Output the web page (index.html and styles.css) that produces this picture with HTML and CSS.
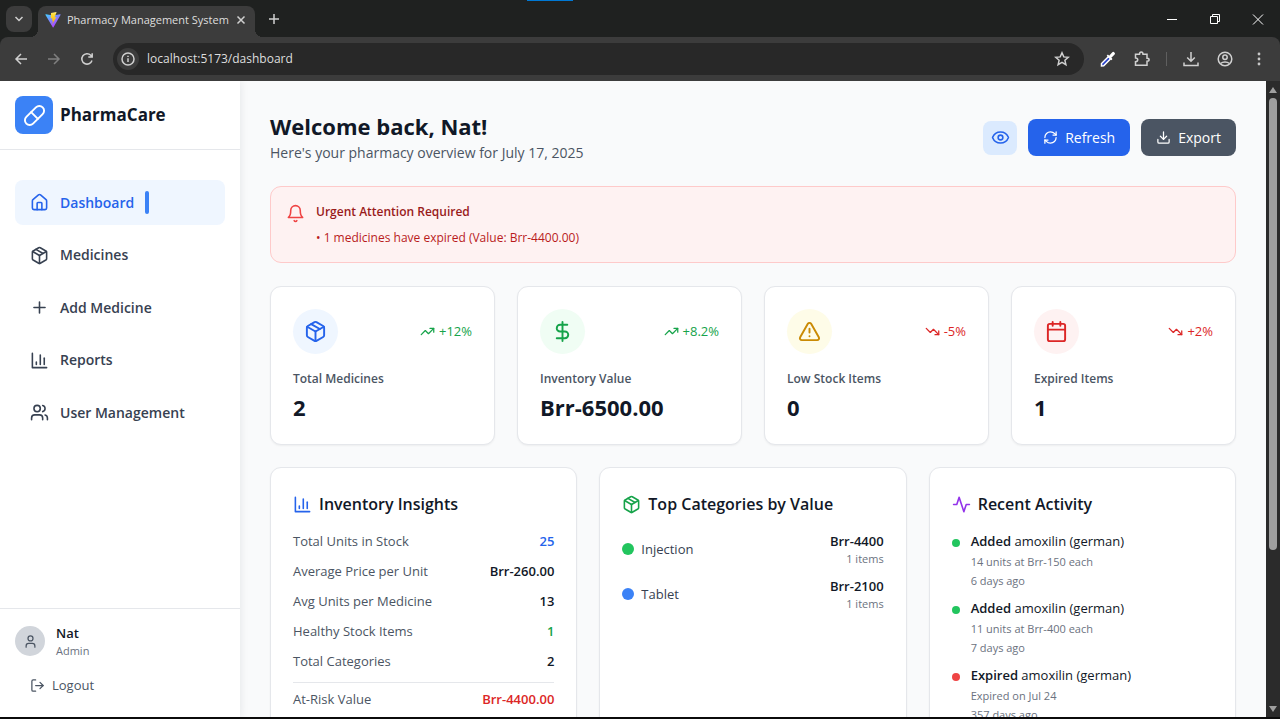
FILE: index.html
```html
<!DOCTYPE html>
<html lang="en">
<head>
<meta charset="utf-8">
<title>Pharmacy Management System</title>
<link rel="stylesheet" href="styles.css">
</head>
<body>
<svg class="defs" aria-hidden="true">
  <symbol id="package" viewBox="0 0 24 24"><path d="m7.5 4.27 9 5.15"/><path d="M21 8a2 2 0 0 0-1-1.73l-7-4a2 2 0 0 0-2 0l-7 4A2 2 0 0 0 3 8v8a2 2 0 0 0 1 1.73l7 4a2 2 0 0 0 2 0l7-4A2 2 0 0 0 21 16Z"/><path d="m3.3 7 8.7 5 8.7-5"/><path d="M12 22V12"/></symbol>
  <symbol id="chart" viewBox="0 0 24 24"><path d="M3 3v18h18"/><path d="M18 17V9"/><path d="M13 17V5"/><path d="M8 17v-3"/></symbol>
  <symbol id="download" viewBox="0 0 24 24"><path d="M21 15v4a2 2 0 0 1-2 2H5a2 2 0 0 1-2-2v-4"/><path d="m7 10 5 5 5-5"/><path d="M12 15V3"/></symbol>
  <symbol id="up" viewBox="0 0 24 24"><path d="m22 7-8.500 8.500-5-5L2 17"/><path d="M16 7h6v6"/></symbol>
  <symbol id="down" viewBox="0 0 24 24"><path d="m22 17-8.500-8.500-5 5L2 7"/><path d="M16 17h6v-6"/></symbol>
</svg>

<header class="browser">
  <div class="tabstrip">
    <button class="tab-search" aria-label="Search tabs"><svg class="icon i12" viewBox="0 0 12 12"><path d="m2.500 4 3.500 3.500L9.500 4"/></svg></button>
    <div class="tab">
      <svg class="favicon" viewBox="0 0 32 32" aria-hidden="true">
        <defs>
          <linearGradient id="va" x1="0" y1="0" x2="0.7" y2="1"><stop offset="0" stop-color="#41d1ff"/><stop offset="1" stop-color="#bd34fe"/></linearGradient>
          <linearGradient id="vb" x1="0" y1="0" x2="0" y2="1"><stop offset="0" stop-color="#ffea83"/><stop offset="0.2" stop-color="#ffdd35"/><stop offset="1" stop-color="#ffa800"/></linearGradient>
        </defs>
        <path fill="url(#va)" d="M31 6 17 30.500a1 1 0 0 1-1.500 0L1 6c-.5-.9.200-1.600 1-1.400l14 2.500 14-2.500c.9-.2 1.500.600 1 1.400z"/>
        <path fill="url(#vb)" d="m22.500 0-10.400 2-.8 11 3.500-.5-1 5 2.300-.6-1.500 7L23 10l-4 .8L23 .8z"/>
      </svg>
      <span class="tab-title">Pharmacy Management System</span>
      <button class="plain" aria-label="Close tab"><svg class="icon i12" viewBox="0 0 12 12"><path d="m2.500 2.500 7 7M9.500 2.500l-7 7"/></svg></button>
    </div>
    <button class="plain new-tab" aria-label="New tab"><svg class="icon i12" viewBox="0 0 12 12"><path d="M6 1v10M1 6h10"/></svg></button>
    <div class="accent"></div>
    <div class="window-controls">
      <button class="plain" aria-label="Minimize"><svg class="icon thin i12" viewBox="0 0 12 12"><path d="M1 6.500h10"/></svg></button>
      <button class="plain" aria-label="Restore"><svg class="icon thin i12" viewBox="0 0 12 12"><path d="M1.500 3.500h7v7h-7zM3.500 3.500v-2h7v7h-2"/></svg></button>
      <button class="plain" aria-label="Close"><svg class="icon thin i12" viewBox="0 0 12 12"><path d="m1 1.500 10 10M11 1.500l-10 10"/></svg></button>
    </div>
  </div>
  <div class="toolbar">
    <div class="nav-buttons">
      <button class="plain" aria-label="Back"><svg class="icon i16" viewBox="0 0 16 16"><path d="M14 8H3M8 3 3 8l5 5"/></svg></button>
      <button class="plain dim" aria-label="Forward"><svg class="icon i16" viewBox="0 0 16 16"><path d="M2 8h11M8 3l5 5-5 5"/></svg></button>
      <button class="plain" aria-label="Reload"><svg class="icon i16" viewBox="0 0 16 16"><path d="M13 9.500a5.200 5.200 0 1 1-1.200-5.200L13 5.800M13.200 2.200v3.900H9.300"/></svg></button>
    </div>
    <div class="omnibox">
      <span class="site-info"><svg class="icon i16" viewBox="0 0 16 16"><circle cx="8" cy="8" r="6"/><path d="M8 7.300v3.700M8 4.700v1.200"/></svg></span>
      <input class="url" type="text" aria-label="Address" value="localhost:5173/dashboard">
      <button class="plain" aria-label="Bookmark"><svg class="icon i16" viewBox="0 0 16 16"><path d="m8 1.800 1.800 4.100 4.500.4-3.400 3 1 4.400L8 11.400l-3.900 2.300 1-4.400-3.400-3 4.500-.4z"/></svg></button>
    </div>
    <div class="extensions">
      <button class="plain" aria-label="Color picker"><svg class="i16" viewBox="0 0 16 16"><path d="M1.500 15v-2.500L8.500 5.500l2.200 2.200-7 7z" fill="#2a43c9" stroke="#fff" stroke-width="1.500"/><path d="m6.700 4.800 1.200-1.200 1.200 1.100 3-3.200a1.500 1.500 0 0 1 2.300 0 1.500 1.500 0 0 1 0 2.300l-3.100 3 1.200 1.300-1.200 1.200z" fill="#fff"/></svg></button>
      <button class="plain" aria-label="Extensions"><svg class="icon i16" viewBox="0 0 16 16"><path d="M1.500 3.300h4C5.500.3 9 .3 9 3.300h4v4c2.800 0 2.800 3 0 3v4H1.500v-3.600c3-.2 3-3.600 0-3.800z"/></svg></button>
      <span class="separator"></span>
      <button class="plain" aria-label="Downloads"><svg class="icon i16" viewBox="0 0 16 16"><path d="M8 1v9M4.200 6.500 8 10.200l3.800-3.700M1 11.500v3h14v-3"/></svg></button>
      <button class="plain" aria-label="Profile"><svg class="icon i16" viewBox="0 0 16 16"><circle cx="8" cy="8" r="6.800"/><circle cx="8" cy="6.300" r="2.200"/><path d="M3.500 12.500c2.500-2 6.500-2 9 0"/></svg></button>
      <button class="plain" aria-label="Menu"><svg class="i16" viewBox="0 0 16 16" fill="#c7c7c7"><circle cx="8" cy="3" r="1.400"/><circle cx="8" cy="8" r="1.400"/><circle cx="8" cy="13" r="1.400"/></svg></button>
    </div>
  </div>
</header>

<div class="app">
  <aside class="sidebar">
    <div class="brand">
      <span class="logo"><svg class="lucide" viewBox="0 0 24 24"><path d="m10.500 20.500 10-10a4.950 4.950 0 1 0-7-7l-10 10a4.950 4.950 0 1 0 7 7Z"/><path d="m8.500 8.500 7 7"/></svg></span>
      <span class="brand-name">PharmaCare</span>
    </div>
    <nav class="menu">
      <a class="menu-item active" href="#dashboard"><svg class="lucide" viewBox="0 0 24 24"><path d="M15 21v-8a1 1 0 0 0-1-1h-4a1 1 0 0 0-1 1v8"/><path d="M3 10a2 2 0 0 1 .709-1.528l7-5.999a2 2 0 0 1 2.582 0l7 5.999A2 2 0 0 1 21 10v9a2 2 0 0 1-2 2H5a2 2 0 0 1-2-2z"/></svg>Dashboard<span class="marker"></span></a>
      <a class="menu-item" href="#medicines"><svg class="lucide"><use href="#package"/></svg>Medicines</a>
      <a class="menu-item" href="#add"><svg class="lucide" viewBox="0 0 24 24"><path d="M5 12h14M12 5v14"/></svg>Add Medicine</a>
      <a class="menu-item" href="#reports"><svg class="lucide"><use href="#chart"/></svg>Reports</a>
      <a class="menu-item" href="#users"><svg class="lucide" viewBox="0 0 24 24"><path d="M16 21v-2a4 4 0 0 0-4-4H6a4 4 0 0 0-4 4v2"/><circle cx="9" cy="7" r="4"/><path d="M22 21v-2a4 4 0 0 0-3-3.870"/><path d="M16 3.130a4 4 0 0 1 0 7.750"/></svg>User Management</a>
    </nav>
    <div class="account">
      <div class="user">
        <span class="avatar"><svg class="lucide small" viewBox="0 0 24 24"><path d="M19 21v-2a4 4 0 0 0-4-4H9a4 4 0 0 0-4 4v2"/><circle cx="12" cy="7" r="4"/></svg></span>
        <div><div class="user-name">Nat</div><div class="user-role">Admin</div></div>
      </div>
      <button class="logout"><svg class="lucide small" viewBox="0 0 24 24"><path d="M9 21H5a2 2 0 0 1-2-2V5a2 2 0 0 1 2-2h4"/><path d="m16 17 5-5-5-5"/><path d="M21 12H9"/></svg>Logout</button>
    </div>
  </aside>

  <main class="content">
    <div class="page-head">
      <div>
        <h1>Welcome back, Nat!</h1>
        <p class="subtitle">Here's your pharmacy overview for July 17, 2025</p>
      </div>
      <div class="actions">
        <button class="btn-eye" aria-label="Toggle view"><svg class="lucide" viewBox="0 0 24 24"><path d="M2.062 12.348a1 1 0 0 1 0-.696 10.750 10.750 0 0 1 19.876 0 1 1 0 0 1 0 .696 10.750 10.750 0 0 1-19.876 0"/><circle cx="12" cy="12" r="3"/></svg></button>
        <button class="btn refresh"><svg class="lucide small" viewBox="0 0 24 24"><path d="M3 12a9 9 0 0 1 9-9 9.750 9.750 0 0 1 6.740 2.740L21 8"/><path d="M21 3v5h-5"/><path d="M21 12a9 9 0 0 1-9 9 9.750 9.750 0 0 1-6.740-2.740L3 16"/><path d="M8 16H3v5"/></svg>Refresh</button>
        <button class="btn export"><svg class="lucide small"><use href="#download"/></svg>Export</button>
      </div>
    </div>

    <section class="alert" role="alert">
      <svg class="lucide bell" viewBox="0 0 24 24"><path d="M6 8a6 6 0 0 1 12 0c0 7 3 9 3 9H3s3-2 3-9"/><path d="M10.300 21a1.940 1.940 0 0 0 3.400 0"/></svg>
      <div>
        <h2>Urgent Attention Required</h2>
        <p>• 1 medicines have expired (Value: Brr-4400.00)</p>
      </div>
    </section>

    <section class="stats">
      <article class="card">
        <div class="card-top"><span class="badge blue"><svg class="lucide large"><use href="#package"/></svg></span><span class="trend good"><svg class="lucide small"><use href="#up"/></svg>+12%</span></div>
        <p class="label">Total Medicines</p><p class="value">2</p>
      </article>
      <article class="card">
        <div class="card-top"><span class="badge green"><svg class="lucide large" viewBox="0 0 24 24"><path d="M12 2v20"/><path d="M17 5H9.500a3.500 3.500 0 0 0 0 7h5a3.500 3.500 0 0 1 0 7H6"/></svg></span><span class="trend good"><svg class="lucide small"><use href="#up"/></svg>+8.2%</span></div>
        <p class="label">Inventory Value</p><p class="value">Brr-6500.00</p>
      </article>
      <article class="card">
        <div class="card-top"><span class="badge yellow"><svg class="lucide large" viewBox="0 0 24 24"><path d="m21.730 18-8-14a2 2 0 0 0-3.480 0l-8 14A2 2 0 0 0 4 21h16a2 2 0 0 0 1.730-3"/><path d="M12 9v4M12 17h.01"/></svg></span><span class="trend bad"><svg class="lucide small"><use href="#down"/></svg>-5%</span></div>
        <p class="label">Low Stock Items</p><p class="value">0</p>
      </article>
      <article class="card">
        <div class="card-top"><span class="badge red"><svg class="lucide large" viewBox="0 0 24 24"><path d="M8 2v4M16 2v4M3 10h18"/><rect x="3" y="4" width="18" height="18" rx="2"/></svg></span><span class="trend bad"><svg class="lucide small"><use href="#down"/></svg>+2%</span></div>
        <p class="label">Expired Items</p><p class="value">1</p>
      </article>
    </section>

    <section class="panels">
      <article class="card panel">
        <h3><svg class="lucide c-blue"><use href="#chart"/></svg>Inventory Insights</h3>
        <dl class="facts">
          <div><dt>Total Units in Stock</dt><dd class="c-blue">25</dd></div>
          <div><dt>Average Price per Unit</dt><dd>Brr-260.00</dd></div>
          <div><dt>Avg Units per Medicine</dt><dd>13</dd></div>
          <div><dt>Healthy Stock Items</dt><dd class="c-green">1</dd></div>
          <div><dt>Total Categories</dt><dd>2</dd></div>
          <div class="risk"><dt>At-Risk Value</dt><dd class="c-red">Brr-4400.00</dd></div>
        </dl>
      </article>
      <article class="card panel">
        <h3><svg class="lucide c-green"><use href="#package"/></svg>Top Categories by Value</h3>
        <ul class="list">
          <li class="category"><span class="dot green-dot"></span><span class="name">Injection</span><span class="amount"><strong>Brr-4400</strong><small>1 items</small></span></li>
          <li class="category"><span class="dot blue-dot"></span><span class="name">Tablet</span><span class="amount"><strong>Brr-2100</strong><small>1 items</small></span></li>
        </ul>
      </article>
      <article class="card panel">
        <h3><svg class="lucide c-purple" viewBox="0 0 24 24"><path d="M22 12h-4l-3 9L9 3l-3 9H2"/></svg>Recent Activity</h3>
        <ul class="list">
          <li class="event"><span class="bullet green-dot"></span><div><p><strong>Added</strong> amoxilin (german)</p><small>14 units at Brr-150 each</small><small>6 days ago</small></div></li>
          <li class="event"><span class="bullet green-dot"></span><div><p><strong>Added</strong> amoxilin (german)</p><small>11 units at Brr-400 each</small><small>7 days ago</small></div></li>
          <li class="event"><span class="bullet red-dot"></span><div><p><strong>Expired</strong> amoxilin (german)</p><small>Expired on Jul 24</small><small>357 days ago</small></div></li>
        </ul>
      </article>
    </section>
  </main>

  <div class="scrollbar" aria-hidden="true">
    <svg class="arrow" viewBox="0 0 8 6"><path d="M4 0 8 6H0z"/></svg>
    <div class="track"><div class="thumb"></div></div>
    <svg class="arrow" viewBox="0 0 8 6"><path d="M4 6 0 0h8z"/></svg>
  </div>
</div>
</body>
</html>
```
FILE: styles.css
```css
* { box-sizing: border-box; }
body {
  margin: 0;
  height: 100vh;
  display: flex;
  flex-direction: column;
  overflow: hidden;
  border-bottom: 2px solid #0b0b0b;
  font-family: "Open Sans", "Noto Sans", sans-serif;
  font-size: 14px;
  line-height: 22px;
  color: #111827;
  background: #f9fafb;
}
h1, h2, h3, p, dl, dd, ul { margin: 0; padding: 0; }
ul { list-style: none; }
button, input { font: inherit; color: inherit; border: 0; padding: 0; background: none; }
button { cursor: pointer; }
svg { flex: none; display: block; }
.defs { position: absolute; width: 0; height: 0; }

.icon { fill: none; stroke: #d0d0d0; stroke-width: 1.5; }
.thin { stroke-width: 1; stroke: #fff; }
.i12 { width: 12px; height: 12px; }
.i16 { width: 16px; height: 16px; }
.lucide { width: 19px; height: 19px; fill: none; stroke: currentColor; stroke-width: 2; stroke-linecap: round; stroke-linejoin: round; }
.small { width: 15px; height: 15px; }
.large { width: 23px; height: 23px; }

/* Browser frame */
.browser { flex: none; background: #1f2120; color: #dedede; }
.tabstrip { display: flex; align-items: flex-start; height: 37px; padding: 6px 0 0 6px; position: relative; }
.tab-search { width: 26px; height: 26px; border-radius: 8px; background: #3c3c3c; display: grid; place-items: center; }
.tab {
  display: flex; align-items: center; width: 217px; height: 31px; margin-left: 6px; padding: 0 8px 4px 7px;
  border-radius: 8px 8px 0 0; background: #3c3c3c; font-size: 11px; position: relative;
}
.tab::before, .tab::after { content: ""; position: absolute; bottom: 0; width: 8px; height: 8px; }
.tab::before { left: -8px; background: radial-gradient(circle at 0 0, transparent 8px, #3c3c3c 8px); }
.tab::after { right: -8px; background: radial-gradient(circle at 100% 0, transparent 8px, #3c3c3c 8px); }
.favicon { width: 16px; height: 16px; margin-right: 6px; }
.tab-title { flex: 1; white-space: nowrap; }
.plain { display: grid; place-items: center; }
.new-tab { height: 26px; margin-left: 13px; }
.accent { position: absolute; top: 0; left: 41.2%; width: 46px; height: 1px; background: #0078d4; }
.window-controls { display: flex; gap: 31px; height: 26px; margin-left: auto; padding-right: 16px; }
.toolbar { display: flex; align-items: center; height: 44px; padding: 0 13px; background: #3c3c3c; border-radius: 8px 8px 0 0; }
.nav-buttons { display: flex; gap: 17px; }
.dim { opacity: 0.45; }
.omnibox { flex: 1; display: flex; align-items: center; gap: 8px; height: 32px; margin-left: 18px; padding: 0 14px 0 4px; border-radius: 16px; background: #282828; }
.site-info { display: grid; place-items: center; width: 22px; height: 22px; border-radius: 50%; background: #3c3c3c; }
.url { flex: 1; min-width: 0; font-size: 12px; color: #dedede; }
.extensions { display: flex; align-items: center; gap: 18px; margin-left: 16px; }
.separator { width: 1px; height: 14px; margin: 0 -2px; background: #5f5f5f; }

/* App shell */
.app { flex: 1; min-height: 0; display: flex; }
.sidebar { position: relative; z-index: 1; flex: none; display: flex; flex-direction: column; width: 240px; background: #fff; box-shadow: 1px 0 8px rgba(15, 23, 42, 0.08); clip-path: inset(0 -12px 0 0); }
.brand { display: flex; align-items: center; gap: 7px; height: 69px; padding: 0 15px; border-bottom: 1px solid #e5e7eb; }
.logo { display: grid; place-items: center; width: 38px; height: 38px; border-radius: 8px; background: #3b82f6; color: #fff; }
.logo .lucide { width: 23px; height: 23px; }
.brand-name { font-size: 17px; font-weight: 700; }
.menu { display: flex; flex-direction: column; justify-content: space-between; height: 255px; margin-top: 30px; padding: 0 15px; }
.menu-item { display: flex; align-items: center; gap: 11px; height: 45px; padding: 0 15px; border-radius: 8px; color: #374151; font-weight: 600; text-decoration: none; }
.active { background: #eff6ff; color: #2563eb; }
.marker { width: 4px; height: 23px; border-radius: 2px; background: #3b82f6; }
.account { margin-top: auto; padding: 15px; border-top: 1px solid #e5e7eb; }
.user { display: flex; align-items: center; gap: 11px; }
.avatar { display: grid; place-items: center; width: 30px; height: 30px; border-radius: 50%; background: #d1d5db; color: #4b5563; }
.user-name { font-size: 13px; line-height: 19px; font-weight: 600; }
.user-role { font-size: 11px; line-height: 15px; color: #6b7280; }
.logout { display: flex; align-items: center; gap: 7px; margin-top: 11px; padding: 7px 15px; font-size: 13px; line-height: 19px; color: #4b5563; }

/* Dashboard */
.content { flex: 1; min-width: 0; padding: 30px; overflow: hidden; background: #f9fafb; }
.page-head { display: flex; align-items: center; justify-content: space-between; }
h1 { font-size: 22px; line-height: 31px; font-weight: 700; }
.subtitle { line-height: 22px; color: #4b5563; }
.actions { display: flex; align-items: center; gap: 11px; }
.btn-eye { display: grid; place-items: center; width: 34px; height: 34px; border-radius: 8px; background: #dbeafe; color: #2563eb; }
.btn { display: flex; align-items: center; gap: 7px; height: 37px; padding: 0 15px; border-radius: 8px; color: #fff; }
.refresh { background: #2563eb; }
.export { background: #4b5563; }
.alert { display: flex; gap: 11px; margin-top: 22px; padding: 15px; border: 1px solid #fecaca; border-radius: 11px; background: #fef2f2; color: #b91c1c; font-size: 12px; line-height: 19px; }
.alert h2 { margin-bottom: 7px; font-size: 12px; font-weight: 600; color: #991b1b; }
.bell { margin-top: 2px; color: #ef4444; }
.stats { display: grid; grid-template-columns: repeat(4, 1fr); gap: 22px; margin-top: 23px; }
.panels { display: grid; grid-template-columns: repeat(3, 1fr); gap: 22px; margin-top: 22px; }
.card { padding: 22px; border: 1px solid #e5e7eb; border-radius: 11px; background: #fff; box-shadow: 0 1px 2px rgba(0, 0, 0, 0.05); }
.card-top { display: flex; align-items: center; justify-content: space-between; }
.badge { display: grid; place-items: center; width: 45px; height: 45px; border-radius: 50%; }
.blue { background: #eff6ff; color: #2563eb; }
.green { background: #f0fdf4; color: #16a34a; }
.yellow { background: #fefce8; color: #ca8a04; }
.red { background: #fef2f2; color: #dc2626; }
.trend { display: flex; align-items: center; gap: 4px; font-size: 13px; line-height: 19px; }
.good, .c-green { color: #16a34a; }
.bad, .c-red { color: #dc2626; }
.c-blue { color: #2563eb; }
.c-purple { color: #9333ea; }
.label { margin-top: 15px; font-size: 12px; line-height: 19px; font-weight: 600; color: #4b5563; }
.value { margin-top: 4px; font-size: 22px; line-height: 30px; font-weight: 700; }
.panel { min-height: 320px; }
.panel h3 { display: flex; align-items: center; gap: 7px; margin-bottom: 14px; font-size: 16px; line-height: 28px; font-weight: 600; }
.facts, .list { display: flex; flex-direction: column; gap: 11px; font-size: 13px; line-height: 19px; }
.facts > div { display: flex; justify-content: space-between; }
dt { color: #4b5563; }
dd, strong { font-weight: 600; }
.facts .risk { padding-top: 7px; border-top: 1px solid #e5e7eb; }
small { display: block; font-size: 11px; line-height: 15px; color: #6b7280; }
.category { display: flex; align-items: center; gap: 7px; }
.dot { width: 12px; height: 12px; border-radius: 50%; }
.name { flex: 1; color: #374151; }
.amount { text-align: right; }
.amount strong { display: block; }
.event { display: flex; gap: 11px; }
.event p { line-height: 18px; }
.event small { margin-top: 4px; }
.bullet { flex: none; width: 8px; height: 8px; margin-top: 7px; border-radius: 50%; }
.green-dot { background: #22c55e; }
.blue-dot { background: #3b82f6; }
.red-dot { background: #ef4444; }

/* Page scrollbar */
.scrollbar { flex: none; display: flex; flex-direction: column; align-items: center; width: 14px; padding: 6px 0 5px; background: #2b2b2b; }
.arrow { width: 8px; height: 6px; fill: #9f9f9f; }
.track { flex: 1; width: 8px; margin: 5px 0; }
.thumb { height: 75%; border-radius: 4px; background: #9f9f9f; }
```
